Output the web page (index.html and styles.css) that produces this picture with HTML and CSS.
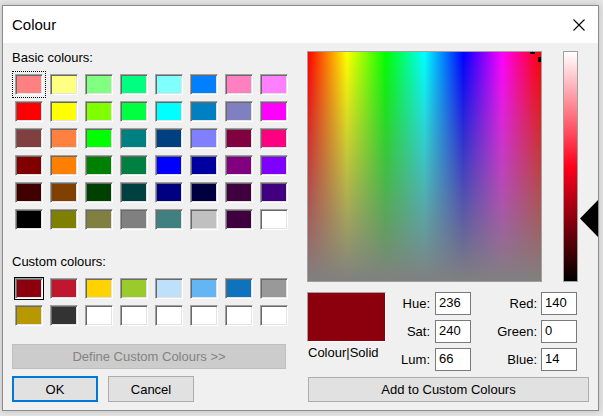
FILE: index.html
```html
<!DOCTYPE html>
<html>
<head>
<meta charset="utf-8">
<title>Colour</title>
<link rel="stylesheet" href="styles.css">
</head>
<body>
<div class="dialog">
  <div class="titlebar">
    <span class="title">Colour</span>
    <svg class="close" width="12" height="12" viewBox="0 0 12 12"><path d="M0.5 0.5 L11.5 11.5 M11.5 0.5 L0.5 11.5" stroke="#000" stroke-width="1.1" fill="none"/></svg>
  </div>
  <div class="content">
    <div class="left">
      <div class="label first">Basic colours:</div>
      <div class="grid basic">
        <div class="sw focus" style="background:#ff8080"></div>
        <div class="sw" style="background:#ffff80"></div>
        <div class="sw" style="background:#80ff80"></div>
        <div class="sw" style="background:#00ff80"></div>
        <div class="sw" style="background:#80ffff"></div>
        <div class="sw" style="background:#0080ff"></div>
        <div class="sw" style="background:#ff80c0"></div>
        <div class="sw" style="background:#ff80ff"></div>

        <div class="sw" style="background:#ff0000"></div>
        <div class="sw" style="background:#ffff00"></div>
        <div class="sw" style="background:#80ff00"></div>
        <div class="sw" style="background:#00ff40"></div>
        <div class="sw" style="background:#00ffff"></div>
        <div class="sw" style="background:#0080c0"></div>
        <div class="sw" style="background:#8080c0"></div>
        <div class="sw" style="background:#ff00ff"></div>

        <div class="sw" style="background:#804040"></div>
        <div class="sw" style="background:#ff8040"></div>
        <div class="sw" style="background:#00ff00"></div>
        <div class="sw" style="background:#008080"></div>
        <div class="sw" style="background:#004080"></div>
        <div class="sw" style="background:#8080ff"></div>
        <div class="sw" style="background:#800040"></div>
        <div class="sw" style="background:#ff0080"></div>

        <div class="sw" style="background:#800000"></div>
        <div class="sw" style="background:#ff8000"></div>
        <div class="sw" style="background:#008000"></div>
        <div class="sw" style="background:#008040"></div>
        <div class="sw" style="background:#0000ff"></div>
        <div class="sw" style="background:#0000a0"></div>
        <div class="sw" style="background:#800080"></div>
        <div class="sw" style="background:#8000ff"></div>

        <div class="sw" style="background:#400000"></div>
        <div class="sw" style="background:#804000"></div>
        <div class="sw" style="background:#004000"></div>
        <div class="sw" style="background:#004040"></div>
        <div class="sw" style="background:#000080"></div>
        <div class="sw" style="background:#000040"></div>
        <div class="sw" style="background:#400040"></div>
        <div class="sw" style="background:#400080"></div>

        <div class="sw" style="background:#000000"></div>
        <div class="sw" style="background:#808000"></div>
        <div class="sw" style="background:#808040"></div>
        <div class="sw" style="background:#808080"></div>
        <div class="sw" style="background:#408080"></div>
        <div class="sw" style="background:#c0c0c0"></div>
        <div class="sw" style="background:#400040"></div>
        <div class="sw" style="background:#ffffff"></div>
      </div>
      <div class="label custom-label">Custom colours:</div>
      <div class="grid custom">
        <div class="sw selected" style="background:#8c000e"></div>
        <div class="sw" style="background:#c0162e"></div>
        <div class="sw" style="background:#ffd200"></div>
        <div class="sw" style="background:#9acb2a"></div>
        <div class="sw" style="background:#bfe0fa"></div>
        <div class="sw" style="background:#63b5f4"></div>
        <div class="sw" style="background:#0f72bd"></div>
        <div class="sw" style="background:#999999"></div>

        <div class="sw" style="background:#b79800"></div>
        <div class="sw" style="background:#333333"></div>
        <div class="sw" style="background:#ffffff"></div>
        <div class="sw" style="background:#ffffff"></div>
        <div class="sw" style="background:#ffffff"></div>
        <div class="sw" style="background:#ffffff"></div>
        <div class="sw" style="background:#ffffff"></div>
        <div class="sw" style="background:#ffffff"></div>
      </div>
      <div class="btn disabled define">Define Custom Colours &gt;&gt;</div>
      <div class="btn-row">
        <div class="btn default">OK</div>
        <div class="btn">Cancel</div>
      </div>
    </div>
    <div class="right">
      <div class="pick-row">
        <div class="spectrum">
          <div class="mark m1"></div>
          <div class="mark m2"></div>
        </div>
        <div class="lumbar"></div>
        <svg class="arrow" width="18" height="37" viewBox="0 0 18 37"><polygon points="0,18.5 18,0 18,37" fill="#000"/></svg>
      </div>
      <div class="values">
        <div class="preview-col">
          <div class="preview"></div>
          <div class="preview-label">Colour|Solid</div>
        </div>
        <div class="fields hsl">
          <label>Hue:</label><div class="input">236</div>
          <label>Sat:</label><div class="input">240</div>
          <label>Lum:</label><div class="input">66</div>
        </div>
        <div class="fields rgb">
          <label>Red:</label><div class="input">140</div>
          <label>Green:</label><div class="input">0</div>
          <label>Blue:</label><div class="input">14</div>
        </div>
      </div>
      <div class="btn add">Add to Custom Colours</div>
    </div>
  </div>
</div>
</body>
</html>
```
FILE: styles.css
```css
html, body {
  margin: 0;
  padding: 0;
}
body {
  width: 603px;
  height: 416px;
  overflow: hidden;
  background: #e4e4e4;
  font-family: "Liberation Sans", Arial, sans-serif;
  font-size: 13px;
  color: #000;
}
.dialog {
  margin: 5px 0 0 2px;
  width: 597px;
  height: 406px;
  box-sizing: border-box;
  border: 1px solid #8c8c8c;
  background: #f0f0f0;
  box-shadow: 0 0 6px rgba(0,0,0,0.18);
  overflow: hidden;
  position: relative;
}
.titlebar {
  height: 37px;
  background: #fff;
  display: flex;
  align-items: center;
  justify-content: space-between;
  padding: 0 13px 0 9px;
}
.title {
  font-size: 15px;
  line-height: 18px;
  margin-top: 1px;
}
.close {
  display: block;
}
.content {
  display: flex;
  padding-left: 9px;
}
.left {
  width: 274px;
  display: flex;
  flex-direction: column;
}
.label {
  line-height: 15px;
  height: 15px;
}
.label.first {
  margin-top: 7px;
}
.grid {
  display: grid;
  grid-template-columns: repeat(8, 28px);
  grid-auto-rows: 21px;
  column-gap: 7px;
  row-gap: 6px;
  padding-left: 3px;
  margin-top: 9px;
}
.sw {
  box-sizing: border-box;
  border: 1px solid;
  border-color: #a0a0a0 #ffffff #ffffff #a0a0a0;
  box-shadow: inset 1px 1px 0 #696969, inset -1px -1px 0 #e3e3e3;
}
.sw.focus {
  outline: 1px dotted #000;
  outline-offset: 2px;
}
.sw.selected {
  outline: 1px solid #000;
  outline-offset: 0;
}
.custom-label {
  margin-top: 24px;
}
.btn {
  box-sizing: border-box;
  height: 26px;
  background: #e1e1e1;
  border: 1px solid #adadad;
  display: flex;
  align-items: center;
  justify-content: center;
}
.btn.define {
  margin-top: 18px;
  height: 25px;
  background: #cccccc;
  border-color: #bfbfbf;
  color: #838383;
}
.btn-row {
  display: flex;
  gap: 10px;
  margin-top: 7px;
}
.btn-row .btn {
  width: 86px;
}
.btn.default {
  border: 2px solid #0078d7;
}
.right {
  margin-left: 21px;
  width: 290px;
  display: flex;
  flex-direction: column;
}
.pick-row {
  margin-top: 8px;
  display: flex;
  position: relative;
  height: 231px;
}
.spectrum {
  position: relative;
  width: 235px;
  height: 231px;
  box-sizing: border-box;
  border: 1px solid #a0a0a0;
  background:
    linear-gradient(to bottom, rgba(128,128,128,0), #808080),
    linear-gradient(to right, #ff0000, #ffff00 16.67%, #00ff00 33.33%, #00ffff 50%, #0000ff 66.67%, #ff00ff 83.33%, #ff0000);
}
.mark {
  position: absolute;
  background: #000;
}
.m1 { left: 222px; top: 0; width: 5px; height: 2px; }
.m2 { left: 230px; top: 5px; width: 3px; height: 5px; }
.lumbar {
  margin-left: 21px;
  width: 15px;
  height: 231px;
  box-sizing: border-box;
  border: 1px solid #a0a0a0;
  background: linear-gradient(to bottom, #ffffff, #ff001a 50%, #000000);
}
.arrow {
  position: absolute;
  left: 273px;
  top: 149px;
}
.values {
  display: flex;
  margin-top: 10px;
}
.preview-col {
  width: 79px;
}
.preview {
  box-sizing: border-box;
  height: 50px;
  background: #8c000e;
  border: 1px solid;
  border-color: #a0a0a0 #ffffff #ffffff #a0a0a0;
}
.preview-label {
  margin-top: 3px;
  padding-left: 1px;
  line-height: 15px;
}
.fields {
  display: grid;
  grid-template-rows: repeat(3, 23px);
  row-gap: 5px;
  align-items: center;
}
.fields.hsl {
  grid-template-columns: 44px 36px;
  column-gap: 5px;
}
.fields.rgb {
  grid-template-columns: 66px 36px;
  column-gap: 4px;
}
.fields label {
  text-align: right;
}
.input {
  box-sizing: border-box;
  height: 23px;
  background: #fff;
  border: 1px solid #7a7a7a;
  padding: 0 0 0 3px;
  line-height: 19px;
}
.btn.add {
  margin-top: 6px;
  margin-left: 1px;
  width: 281px;
  height: 25px;
}
```
